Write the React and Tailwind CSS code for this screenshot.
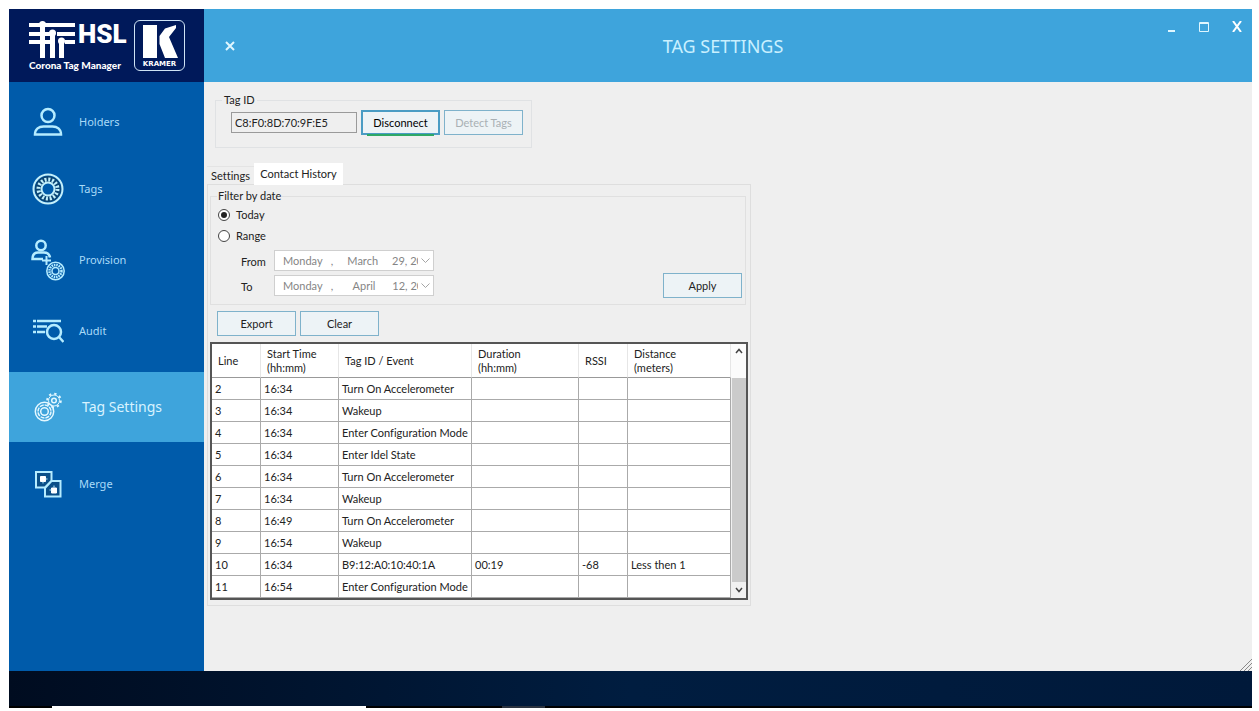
import React, { useState } from "react";

const NAV_ITEMS = [
  { name: "Holders", icon: HolderIcon, cls: "h-[67px]" },
  { name: "Tags", icon: TagIcon, cls: "h-[67px]" },
  { name: "Provision", icon: ProvisionIcon, cls: "h-[75px]" },
  { name: "Audit", icon: AuditIcon, cls: "h-[67px] mb-2" },
  { name: "Tag Settings", icon: SettingsIcon, cls: "h-[70px]" },
  { name: "Merge", icon: MergeIcon, cls: "h-[84px]" },
];

const COLUMNS = [
  { label: "Line", width: "w-[49px]" },
  { label: "Start Time (hh:mm)", width: "w-[78px]" },
  { label: "Tag ID / Event", width: "w-[133px]" },
  { label: "Duration (hh:mm)", width: "w-[107px]" },
  { label: "RSSI", width: "w-[49px]" },
  { label: "Distance (meters)", width: "w-[103px]" },
];

const ROWS = [
  ["2", "16:34", "Turn On Accelerometer", "", "", ""],
  ["3", "16:34", "Wakeup", "", "", ""],
  ["4", "16:34", "Enter Configuration Mode", "", "", ""],
  ["5", "16:34", "Enter Idel State", "", "", ""],
  ["6", "16:34", "Turn On Accelerometer", "", "", ""],
  ["7", "16:34", "Wakeup", "", "", ""],
  ["8", "16:49", "Turn On Accelerometer", "", "", ""],
  ["9", "16:54", "Wakeup", "", "", ""],
  ["10", "16:34", "B9:12:A0:10:40:1A", "00:19", "-68", "Less then 1"],
  ["11", "16:54", "Enter Configuration Mode", "", "", ""],
];

export default function App() {
  const [page, setPage] = useState("Tag Settings");

  return (
    <div className="flex min-h-screen flex-col bg-white pt-[9px] pr-[7px] pb-[3px] pl-[9px] font-['Noto_Sans','Open_Sans',sans-serif] text-[11px] leading-4 text-[#222]">
      <div className="flex flex-1">
        <aside className="flex w-[195px] shrink-0 flex-col bg-[#005baa]">
          <Brand />
          <nav className="flex flex-col pt-[6px]">
            {NAV_ITEMS.map((item) => (
              <NavItem key={item.name} item={item} active={item.name === page} onSelect={() => setPage(item.name)} />
            ))}
          </nav>
        </aside>

        <div className="flex min-w-0 flex-1 flex-col">
          <TitleBar />
          <main className="relative flex-1 bg-[#efefef] pt-[10px] pl-[3px] font-['Lato','Open_Sans',sans-serif] [font-variant-ligatures:none]">
            <TagIdBox />
            <HistoryTabs />
            <ResizeGrip />
          </main>
        </div>
      </div>

      <footer>
        <div className="h-[35px] bg-linear-to-r from-[#000c20] via-[#001d40] to-[#00193a]" />
        <div className="flex h-[2px] bg-black pl-[43px]">
          <div className="w-[314px] bg-white" />
          <div className="ml-[136px] w-[43px] bg-[#2b333f]" />
        </div>
      </footer>
    </div>
  );
}

function Brand() {
  return (
    <div className="flex h-[73px] items-center gap-2 bg-[#00195a] pl-5 text-white">
      <div className="flex w-[97px] flex-col">
        <div className="flex h-[38px] items-start gap-[3px]">
          <HslMark />
          <span className="font-['Roboto','Open_Sans',sans-serif] text-[26px] leading-[27px] font-black">HSL</span>
        </div>
        <span className="font-['Lato','Open_Sans',sans-serif] text-[10px] leading-3 font-black whitespace-nowrap">Corona Tag Manager</span>
      </div>
      <div className="flex h-[51px] w-[51px] shrink-0 flex-col items-center rounded-md border border-[#cfe3f5] pt-1">
        <svg viewBox="0 0 36 34" className="h-[34px] w-9 shrink-0" fill="#fff" aria-hidden="true">
          <path d="M1 0h14v33H1zM17.500 11 23 3.500 34 0v3l-7 9 9 21H23l-5.500-14z" />
        </svg>
        <span className="font-['DejaVu_Sans',sans-serif] text-[7px] leading-[10px] font-bold">KRAMER</span>
      </div>
    </div>
  );
}

function NavItem({ item, active, onSelect }) {
  const Icon = item.icon;
  return (
    <button
      type="button"
      onClick={onSelect}
      className={`flex items-center gap-[14px] pl-[22px] text-left ${item.cls} ${
        active ? "bg-[#3ea4dc] text-sm text-[#d8f3ff]" : "text-[11px] text-[#a9daf8]"
      }`}
    >
      <span className="flex w-[34px] shrink-0 justify-center">
        <Icon />
      </span>
      <span className={active ? "pl-[3px]" : ""}>{item.name}</span>
    </button>
  );
}

function TitleBar() {
  return (
    <header className="grid h-[73px] grid-cols-[1fr_auto_1fr] items-center bg-[#3ea4dc] pr-[10px] text-[#dff6ff]">
      <button type="button" aria-label="Close page" className="ml-[21px] justify-self-start">
        <svg viewBox="0 0 10 10" className="h-[10px] w-[10px]" stroke="currentColor" strokeWidth="2">
          <path d="M1 1l8 8M9 1L1 9" />
        </svg>
      </button>
      <h1 className="text-[18px] leading-6 text-[#c9f0ff]">TAG SETTINGS</h1>
      <div className="flex gap-[23px] self-start justify-self-end pt-3">
        <button type="button" aria-label="Minimize">
          <svg viewBox="0 0 10 11" className="h-[11px] w-[10px]" stroke="currentColor" strokeWidth="2">
            <path d="M2 10h7" />
          </svg>
        </button>
        <button type="button" aria-label="Maximize">
          <svg viewBox="0 0 10 11" className="h-[11px] w-[10px]" fill="none" stroke="currentColor" strokeWidth="1">
            <path d="M.5 1.500h9v9h-9zM.5 2.500h9" />
          </svg>
        </button>
        <button type="button" aria-label="Close">
          <svg viewBox="0 0 10 11" className="h-[11px] w-[10px] text-white" stroke="currentColor" strokeWidth="2">
            <path d="M1 0l8 11M9 0L1 11" />
          </svg>
        </button>
      </div>
    </header>
  );
}

function TagIdBox() {
  return (
    <fieldset className="ml-2 h-14 w-[317px] border border-[#e0e2e4] pl-[15px]">
      <legend className="-ml-[9px] px-[2px]">
        <label htmlFor="tag-id">Tag ID</label>
      </legend>
      <div className="flex items-center gap-1 pt-[2px]">
        <input
          id="tag-id"
          readOnly
          value="C8:F0:8D:70:9F:E5"
          className="h-[21px] w-[126px] border border-[#9a9a9a] bg-[#efefef] px-[3px] outline-none"
        />
        <div className="relative flex">
          <Button className="border-2 border-[#4a9cc4] text-black">Disconnect</Button>
          <div className="absolute inset-x-[6px] -bottom-px h-[2px] bg-[#2fa866]" />
        </div>
        <Button disabled className="border border-[#7fb2cb] text-[#a9b0b4]">
          Detect Tags
        </Button>
      </div>
    </fieldset>
  );
}

function Button({ className, ...props }) {
  return <button type="button" className={`h-[25px] w-[79px] shrink-0 bg-[#edf3f6] ${className}`} {...props} />;
}

function HistoryTabs() {
  return (
    <section className="mt-[15px]">
      <div role="tablist" className="flex items-end">
        <button type="button" role="tab" aria-selected="false" className="h-[19px] w-[47px] border-t border-[#e4e4e4] text-center">
          Settings
        </button>
        <button type="button" role="tab" aria-selected="true" className="h-[22px] w-[89px] bg-white text-center">
          Contact History
        </button>
      </div>
      <div role="tabpanel" className="-mt-px w-[544px] border border-[#dedede] px-[2px] pt-[3px] pb-[5px]">
        <DateFilter />
        <div className="flex gap-1 pt-[6px] pb-[6px] pl-[7px]">
          <Button className="border border-[#7fb2cb]">Export</Button>
          <Button className="border border-[#7fb2cb]">Clear</Button>
        </div>
        <HistoryTable />
      </div>
    </section>
  );
}

function DateFilter() {
  const [mode, setMode] = useState("today");
  const disabled = mode === "today";

  return (
    <fieldset className="flex w-[536px] items-end justify-between border border-[#e0e0e0] pr-[3px] pb-[6px] pl-[7px]">
      <legend className="-ml-px px-px">Filter by date</legend>
      <div className="flex flex-col">
        <RadioRow label="Today" checked={mode === "today"} onChange={() => setMode("today")} />
        <RadioRow label="Range" checked={mode === "range"} onChange={() => setMode("range")} />
        <div className="flex flex-col gap-1 pt-1 pb-[2px] pl-[23px]">
          <DateRow id="from" label="From" value={"Monday\u00a0\u00a0\u00a0,\u00a0\u00a0\u00a0\u00a0\u00a0March\u00a0\u00a0\u00a0\u00a0\u00a029, 2021"} disabled={disabled} />
          <DateRow id="to" label="To" value={"Monday\u00a0\u00a0\u00a0,\u00a0\u00a0\u00a0\u00a0\u00a0\u00a0\u00a0April\u00a0\u00a0\u00a0\u00a0\u00a0\u00a012, 2021"} disabled={disabled} />
        </div>
      </div>
      <Button className="border border-[#7fb2cb]">Apply</Button>
    </fieldset>
  );
}

function RadioRow({ label, checked, onChange }) {
  return (
    <label className="flex h-[21px] items-center gap-[6px]">
      <input
        type="radio"
        name="filter"
        checked={checked}
        onChange={onChange}
        className="grid size-3 appearance-none place-items-center rounded-full border border-[#444] bg-white before:size-[6px] before:rounded-full checked:before:bg-[#222]"
      />
      {label}
    </label>
  );
}

function DateRow({ id, label, value, disabled }) {
  return (
    <div className="flex h-[21px] items-center">
      <label htmlFor={id} className="w-[33px] pt-[2px]">{label}</label>
      <div className="relative flex">
        <select
          id={id}
          disabled={disabled}
          className="h-[21px] w-[160px] appearance-none border border-[#cfcfcf] bg-white pr-[15px] pl-2 text-[#858585] opacity-100"
        >
          <option>{value}</option>
        </select>
        <svg viewBox="0 0 9 5" className="pointer-events-none absolute top-2 right-1 h-[5px] w-[9px]" fill="none" stroke="#a5a5a5">
          <path d="M.5.5l4 4 4-4" />
        </svg>
      </div>
    </div>
  );
}

function HistoryTable() {
  return (
    <div className="flex w-[538px] border-2 border-[#555] bg-white">
      <table className="w-[519px] table-fixed border-separate border-spacing-0">
        <thead>
          <tr className="h-[34px]">
            {COLUMNS.map((col) => (
              <th
                key={col.label}
                className={`border-r border-b border-r-[#e6e6e6] border-b-[#999] px-[6px] py-0 text-left leading-[14px] font-normal ${col.width}`}
              >
                {col.label.includes("(") ? (
                  <>
                    {col.label.split(" (")[0]}
                    <br />({col.label.split(" (")[1]}
                  </>
                ) : (
                  col.label
                )}
              </th>
            ))}
          </tr>
        </thead>
        <tbody>
          {ROWS.map((row) => (
            <tr key={row[0]} className="h-[22px]">
              {row.map((cell, i) => (
                <td key={i} className="border-r border-b border-[#aaa] py-0 pr-0 pl-[3px] whitespace-nowrap">
                  {cell}
                </td>
              ))}
            </tr>
          ))}
        </tbody>
      </table>
      <div className="flex flex-1 flex-col bg-[#f1f1f1]">
        <button type="button" aria-label="Scroll up" className="grid h-[34px] justify-items-center bg-[#fbfbfb] pt-1">
          <Chevron d="M1 5l3-3.500 3 3.500" />
        </button>
        <div className="ml-px flex-1 bg-[#cbcbcb]" />
        <button type="button" aria-label="Scroll down" className="grid h-4 place-items-center">
          <Chevron d="M1 1l3 3.500 3-3.500" />
        </button>
      </div>
    </div>
  );
}

function Chevron({ d }) {
  return (
    <svg viewBox="0 0 8 6" className="h-[6px] w-2" fill="none" stroke="#444" strokeWidth="1.500">
      <path d={d} />
    </svg>
  );
}

function ResizeGrip() {
  return (
    <svg viewBox="0 0 12 12" className="absolute right-0 bottom-0 size-3" stroke="#8a8a8a" aria-hidden="true">
      <path d="M0 12L12 0M4 12l8-8M8 12l4-4" />
    </svg>
  );
}

function HslMark() {
  return (
    <svg viewBox="0 0 46 37" className="h-[37px] w-[46px] shrink-0" fill="#fff" aria-hidden="true">
      <path d="M0 2h46v4H0zM0 11h11v4H0zM16 11h7v4h-7zM28 11h18v4H28zM0 19h11v4H0zM16 19h5v4h-5zM36 19h10v4H36z" />
      <g>
        <path d="M11 5h5v32h-5z" />
        <path d="M21 13h5v24h-5z" />
        <path d="M30 21h5v16h-5z" />
        <circle cx="13.500" cy="3.500" r="3.500" />
        <circle cx="23.500" cy="12" r="3.500" />
        <circle cx="32.500" cy="20" r="3.500" />
      </g>
    </svg>
  );
}

function HolderIcon() {
  return (
    <svg viewBox="0 0 30 30" className="size-[30px]" fill="none" stroke="#b5ecff" strokeWidth="2.500">
      <circle cx="15" cy="8.500" r="6.500" />
      <path d="M2 27.500c0-5.500 4-8 8.500-8h9c4.500 0 8.500 2.500 8.500 8z" />
    </svg>
  );
}

function TagIcon() {
  return (
    <svg viewBox="0 0 32 32" className="size-8" fill="none" stroke="#c4f0fb">
      <circle cx="16" cy="16" r="14.500" strokeWidth="2" />
      <circle cx="16" cy="16" r="10" stroke="#0a4473" strokeWidth="6" />
      <circle cx="16" cy="16" r="9.500" strokeWidth="4" strokeDasharray="2 1.730" />
      <circle cx="16" cy="16" r="6.500" strokeWidth="2" />
    </svg>
  );
}

function ProvisionIcon() {
  return (
    <svg viewBox="0 0 34 42" className="h-[42px] w-[34px]" fill="none" stroke="#b5ecff">
      <circle cx="10" cy="6.500" r="4.700" strokeWidth="2.500" />
      <path d="M12 20H1.500c0-4.500 2.500-6.500 5.500-6.500h6c3 0 5.500 2 6 5" strokeWidth="2.500" />
      <path d="M15.500 17v9M11 21.500h9" strokeWidth="2" />
      <circle cx="24.500" cy="32" r="8.700" strokeWidth="1.500" />
      <circle cx="24.500" cy="32" r="6" strokeWidth="2.500" strokeDasharray="1.500 .86" />
      <circle cx="24.500" cy="32" r="3.500" strokeWidth="1.500" />
    </svg>
  );
}

function AuditIcon() {
  return (
    <svg viewBox="0 0 32 24" className="h-6 w-8" fill="none" stroke="#b5ecff" strokeWidth="2.500">
      <path d="M1 2h3M5 2h24M1 7.500h3M5 7.500h10M1 13h3M5 13h8" />
      <circle cx="22" cy="13" r="7" />
      <path d="M27 18l4.500 5" strokeWidth="2.500" />
    </svg>
  );
}

function SettingsIcon() {
  return (
    <svg viewBox="0 0 28 30" className="h-[30px] w-7" fill="none" stroke="#e3f7ff">
      <circle cx="10.500" cy="19.500" r="9.200" strokeWidth="1.500" />
      <circle cx="10.500" cy="19.500" r="6.500" strokeWidth="1.500" strokeDasharray="4 1" />
      <circle cx="10.500" cy="19.500" r="3.800" strokeWidth="1.500" />
      <circle cx="20" cy="8.500" r="5.500" strokeWidth="1" />
      <circle cx="20" cy="8.500" r="6.800" strokeWidth="2" strokeDasharray="2.340 3" />
      <circle cx="20" cy="8.500" r="2.300" strokeWidth="1.500" />
    </svg>
  );
}

function MergeIcon() {
  return (
    <svg viewBox="0 0 28 28" className="size-7" fill="#0a4f88" stroke="#b5ecff" strokeWidth="2">
      <path d="M2 2h15.500v9l-6.500 6.500H2z" />
      <path d="M26.500 26.500H11V18l6.500-7h9z" />
      <path d="M6.500 6.500h5v5h-5zM17.500 18h5v5h-5z" fill="#fff" stroke="#fff" strokeWidth="1" />
      <path d="M9 13.500v-2M13.500 9h-2M20 15.500v2M15.500 20h2" strokeWidth="1" />
    </svg>
  );
}
